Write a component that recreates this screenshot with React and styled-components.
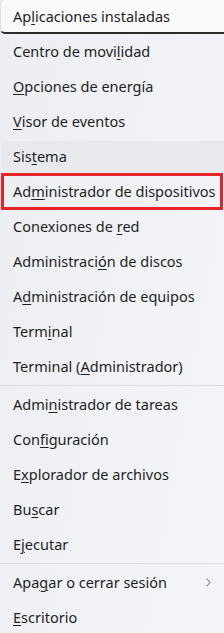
import React from 'react'
import styled, { createGlobalStyle } from 'styled-components'

const GlobalStyle = createGlobalStyle`
  html, body {
    margin: 0;
    padding: 0;
    width: 224px;
    height: 633px;
    overflow: hidden;
    background: #eff0f3;
  }
  body {
    font-family: "Noto Sans", "Open Sans", "DejaVu Sans", sans-serif;
  }
`

const Menu = styled.div`
  width: 224px;
  height: 634px;
  margin-top: -1px;
  display: flex;
  flex-direction: column;
  background: linear-gradient(100deg, #eceef1 0%, #f1f2f5 55%, #f4f5f8 100%);
`

const Row = styled.div`
  position: relative;
  box-sizing: border-box;
  height: 35px;
  flex: none;
  display: flex;
  align-items: center;
  justify-content: space-between;
  padding: 0 13px 1px 13px;
  font-size: 14.5px;
  color: #1f1f1f;
  white-space: nowrap;

  u {
    text-decoration-thickness: 1px;
    text-underline-offset: 2px;
  }
`

const Focused = styled(Row)`
  margin-right: -6px;
  background: #f8f9fa;
  border: 1px solid #dcdde0;
  border-bottom: 2px solid #2b2b2b;
  border-radius: 5px;
  padding-left: 12px;
  padding-bottom: 0;
`

const Hover = styled(Row)`
  &::before {
    content: '';
    position: absolute;
    left: 2px;
    right: -6px;
    top: 2px;
    bottom: 1px;
    border-radius: 4px;
    background: #e8e9ec;
    z-index: 0;
  }
  span { position: relative; }
`

const Marked = styled(Row)`
  &::after {
    content: '';
    position: absolute;
    left: 1px;
    right: 1px;
    top: -1px;
    bottom: -1px;
    border: 3px solid #e4232a;
    pointer-events: none;
  }
`

const Separator = styled.div`
  flex: none;
  height: 1px;
  margin: 1px 0;
  background: #dcdde0;
`

const Chevron = () => (
  <svg width="5" height="9" viewBox="0 0 5 9" fill="none">
    <path d="M1 1l3 3.5L1 8" stroke="#5c5c5c" strokeWidth="1" strokeLinecap="round" strokeLinejoin="round" />
  </svg>
)

const Label = ({ pre, key_, post }) => (
  <span>{pre}<u>{key_}</u>{post}</span>
)

export default function App() {
  return (
    <>
      <GlobalStyle />
      <Menu>
        <Focused><Label pre="Ap" key_="l" post="icaciones instaladas" /></Focused>
        <Row><Label pre="Centro de movi" key_="l" post="idad" /></Row>
        <Row><Label pre="" key_="O" post="pciones de energía" /></Row>
        <Row><Label pre="" key_="V" post="isor de eventos" /></Row>
        <Hover><Label pre="Sis" key_="t" post="ema" /></Hover>
        <Marked><Label pre="Ad" key_="m" post="inistrador de dispositivos" /></Marked>
        <Row><Label pre="Conexiones de " key_="r" post="ed" /></Row>
        <Row><Label pre="Administraci" key_="ó" post="n de discos" /></Row>
        <Row><Label pre="A" key_="d" post="ministración de equipos" /></Row>
        <Row><Label pre="Term" key_="i" post="nal" /></Row>
        <Row><Label pre="Terminal (" key_="A" post="dministrador)" /></Row>
        <Separator />
        <Row><Label pre="Admi" key_="n" post="istrador de tareas" /></Row>
        <Row><Label pre="Con" key_="f" post="iguración" /></Row>
        <Row><Label pre="E" key_="x" post="plorador de archivos" /></Row>
        <Row><Label pre="Bu" key_="s" post="car" /></Row>
        <Row><Label pre="E" key_="j" post="ecutar" /></Row>
        <Separator />
        <Row><Label pre="Apa" key_="g" post="ar o cerrar sesión" /><Chevron /></Row>
        <Row><Label pre="" key_="E" post="scritorio" /></Row>
      </Menu>
    </>
  )
}
